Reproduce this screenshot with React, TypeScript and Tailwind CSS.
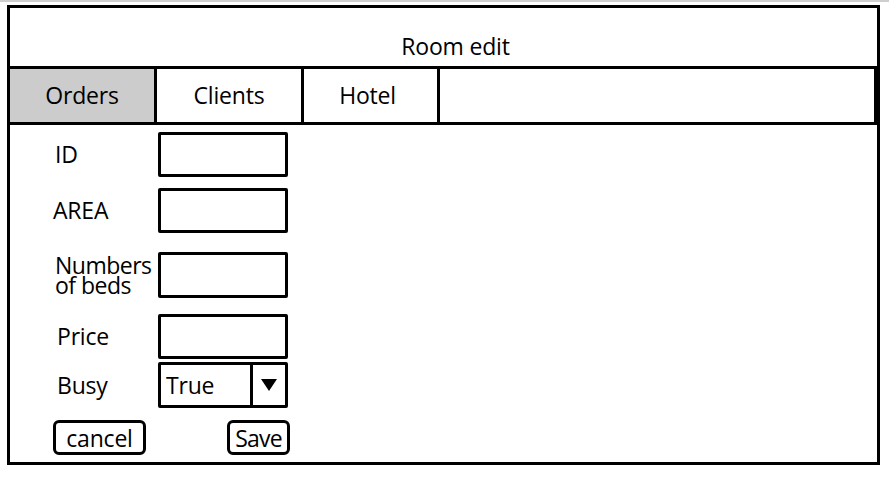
import React from "react";

function Field({ label, labelClass, rowClass, h }: { label: React.ReactNode; labelClass: string; rowClass: string; h: string }) {
  return (
    <div className={`flex items-center ${rowClass}`}>
      <div className={`w-[105px] ${labelClass}`}>{label}</div>
      <div className={`w-[130px] ${h} border-[3px] border-black rounded-[2px] bg-white`} />
    </div>
  );
}

export default function App() {
  return (
    <div className="w-[889px] h-[479px] bg-white overflow-hidden text-black font-['Open_Sans',sans-serif]">
      <div className="h-[2px] bg-[#cfcfcf]" />
      <div className="ml-[7px] mt-[3px] w-[873px] h-[460px] border-[3px] border-black flex flex-col">
        <div className="h-[58px] flex justify-center items-start pt-[23px] pl-[24px]">
          <span className="text-[23px] leading-[30px] tracking-[-0.2px]">Room edit</span>
        </div>
        <div className="h-[59px] border-y-[3px] border-r-[3px] border-black flex text-[23px] tracking-[-0.2px]">
          <div className="w-[144px] bg-[#cccccc] flex items-center justify-center">Orders</div>
          <div className="w-[147px] border-l-[3px] border-black flex items-center justify-center">Clients</div>
          <div className="w-[136px] border-l-[3px] border-black flex items-center justify-center pr-[6px]">Hotel</div>
          <div className="flex-1 border-l-[3px] border-black" />
        </div>
        <div className="pl-[43px] flex flex-col text-[23px] tracking-[-0.2px]">
          <Field rowClass="mt-[7px]" h="h-[45px]" labelClass="pl-[2px]" label="ID" />
          <Field rowClass="mt-[11px]" h="h-[45px]" labelClass="" label="AREA" />
          <Field
            rowClass="mt-[19px]"
            h="h-[46px]"
            labelClass="pl-[2px] leading-[20px] tracking-[-0.5px]"
            label={
              <>
                Numbers
                <br />
                of beds
              </>
            }
          />
          <Field rowClass="mt-[16px]" h="h-[45px]" labelClass="pl-[4px]" label="Price" />
          <div className="flex items-center mt-[3px]">
            <div className="w-[105px] pl-[4px]">Busy</div>
            <div className="w-[130px] h-[46px] border-[3px] border-black rounded-[2px] flex">
              <div className="w-[89px] flex items-center pl-[5px] pt-[1px]">True</div>
              <div className="flex-1 border-l-[3px] border-black flex items-center justify-center">
                <svg width="16" height="12" viewBox="0 0 16 12">
                  <polygon points="0,0 16,0 8,12" fill="black" />
                </svg>
              </div>
            </div>
          </div>
          <div className="flex items-center mt-[12px] text-[23px] leading-[28px]">
            <div className="w-[93px] h-[35px] border-[3px] border-black rounded-[6px] flex items-center justify-center">cancel</div>
            <div className="ml-[81px] w-[63px] h-[35px] border-[3px] border-black rounded-[6px] flex items-center justify-center tracking-[-0.8px]">Save</div>
          </div>
        </div>
      </div>
    </div>
  );
}
